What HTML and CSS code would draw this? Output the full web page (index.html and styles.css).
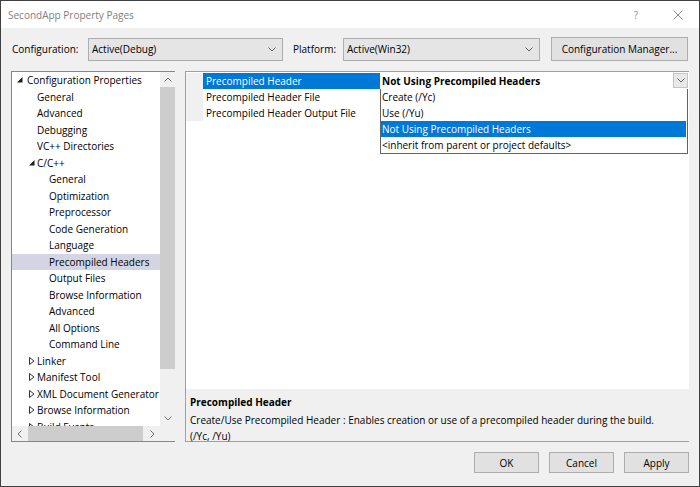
FILE: index.html
```html
<!DOCTYPE html>
<html>
<head>
<meta charset="utf-8">
<title>SecondApp Property Pages</title>
<link rel="stylesheet" href="styles.css">
</head>
<body>
<div class="window">
  <div class="titlebar">
    <span class="title">SecondApp Property Pages</span>
    <span class="tb-btn">?</span>
    <span class="tb-btn"><svg width="10" height="10" viewBox="0 0 10 10"><path d="M0.5 0.5 L9.5 9.5 M9.5 0.5 L0.5 9.5" stroke="#8c8c8c" stroke-width="1" fill="none"/></svg></span>
  </div>

  <div class="config-row">
    <span class="label-config">Configuration:</span>
    <div class="combo combo-config"><span>Active(Debug)</span><svg class="chev" width="8" height="5" viewBox="0 0 8 5"><polyline points="0.5,0.5 4,4 7.5,0.5" stroke="#606060" fill="none"/></svg></div>
    <span class="label-platform">Platform:</span>
    <div class="combo combo-platform"><span>Active(Win32)</span><svg class="chev" width="8" height="5" viewBox="0 0 8 5"><polyline points="0.5,0.5 4,4 7.5,0.5" stroke="#606060" fill="none"/></svg></div>
    <button class="btn btn-cfgmgr">Configuration Manager...</button>
  </div>

  <div class="main">
    <div class="tree">
      <div class="tree-body">
        <div class="tree-items">
          <div class="row l0"><span class="toggle"><svg width="6" height="6" viewBox="0 0 6 6"><polygon points="5.5,0 5.5,5.5 0,5.5" fill="#1e1e1e"/></svg></span>Configuration Properties</div>
          <div class="row l1"><span class="toggle"></span>General</div>
          <div class="row l1"><span class="toggle"></span>Advanced</div>
          <div class="row l1"><span class="toggle"></span>Debugging</div>
          <div class="row l1"><span class="toggle"></span>VC++ Directories</div>
          <div class="row l1"><span class="toggle tg1"><svg width="6" height="6" viewBox="0 0 6 6"><polygon points="5.5,0 5.5,5.5 0,5.5" fill="#1e1e1e"/></svg></span>C/C++</div>
          <div class="row l2"><span class="toggle"></span>General</div>
          <div class="row l2"><span class="toggle"></span>Optimization</div>
          <div class="row l2"><span class="toggle"></span>Preprocessor</div>
          <div class="row l2"><span class="toggle"></span>Code Generation</div>
          <div class="row l2"><span class="toggle"></span>Language</div>
          <div class="row l2 selected"><span class="toggle"></span>Precompiled Headers</div>
          <div class="row l2"><span class="toggle"></span>Output Files</div>
          <div class="row l2"><span class="toggle"></span>Browse Information</div>
          <div class="row l2"><span class="toggle"></span>Advanced</div>
          <div class="row l2"><span class="toggle"></span>All Options</div>
          <div class="row l2"><span class="toggle"></span>Command Line</div>
          <div class="row l1"><span class="toggle tg1"><svg width="6" height="8" viewBox="0 0 6 8"><polygon points="0.5,0.5 5,4 0.5,7.5" fill="none" stroke="#333"/></svg></span>Linker</div>
          <div class="row l1"><span class="toggle tg1"><svg width="6" height="8" viewBox="0 0 6 8"><polygon points="0.5,0.5 5,4 0.5,7.5" fill="none" stroke="#333"/></svg></span>Manifest Tool</div>
          <div class="row l1"><span class="toggle tg1"><svg width="6" height="8" viewBox="0 0 6 8"><polygon points="0.5,0.5 5,4 0.5,7.5" fill="none" stroke="#333"/></svg></span>XML Document Generator</div>
          <div class="row l1"><span class="toggle tg1"><svg width="6" height="8" viewBox="0 0 6 8"><polygon points="0.5,0.5 5,4 0.5,7.5" fill="none" stroke="#333"/></svg></span>Browse Information</div>
          <div class="row l1"><span class="toggle tg1"><svg width="6" height="8" viewBox="0 0 6 8"><polygon points="0.5,0.5 5,4 0.5,7.5" fill="none" stroke="#333"/></svg></span>Build Events</div>
        </div>
        <div class="vscroll">
          <div class="sb-arrow"><svg width="8" height="5" viewBox="0 0 8 5"><polyline points="0.5,4.5 4,1 7.5,4.5" stroke="#707070" fill="none"/></svg></div>
          <div class="vthumb"></div>
          <div class="vtrack"></div>
          <div class="sb-arrow"><svg width="8" height="5" viewBox="0 0 8 5"><polyline points="0.5,0.5 4,4 7.5,0.5" stroke="#707070" fill="none"/></svg></div>
        </div>
      </div>
      <div class="hscroll-row">
        <div class="hscroll">
          <div class="sb-arrow"><svg width="5" height="8" viewBox="0 0 5 8"><polyline points="4.5,0.5 1,4 4.5,7.5" stroke="#707070" fill="none"/></svg></div>
          <div class="hthumb"></div>
          <div class="htrack"></div>
          <div class="sb-arrow"><svg width="5" height="8" viewBox="0 0 5 8"><polyline points="0.5,0.5 4,4 0.5,7.5" stroke="#707070" fill="none"/></svg></div>
        </div>
        <div class="corner"></div>
      </div>
    </div>

    <div class="right">
      <div class="grid">
        <div class="prow">
          <div class="gutter"></div>
          <div class="pname sel">Precompiled Header</div>
          <div class="pval"><span class="pval-text bold">Not Using Precompiled Headers</span><span class="dd-btn"><svg width="8" height="5" viewBox="0 0 8 5"><polyline points="0.5,0.5 4,4 7.5,0.5" stroke="#606060" fill="none"/></svg></span></div>
        </div>
        <div class="prow">
          <div class="gutter"></div>
          <div class="pname">Precompiled Header File</div>
          <div class="pval"></div>
        </div>
        <div class="prow">
          <div class="gutter"></div>
          <div class="pname">Precompiled Header Output File</div>
          <div class="pval"></div>
        </div>
        <div class="dropdown">
          <div class="dd-item">Create (/Yc)</div>
          <div class="dd-item">Use (/Yu)</div>
          <div class="dd-item dd-sel">Not Using Precompiled Headers</div>
          <div class="dd-item">&lt;inherit from parent or project defaults&gt;</div>
        </div>
      </div>
      <div class="desc">
        <div class="desc-title">Precompiled Header</div>
        <div class="desc-text">Create/Use Precompiled Header : Enables creation or use of a precompiled header during the build.<br>(/Yc, /Yu)</div>
      </div>
    </div>
  </div>

  <div class="buttons">
    <button class="btn btn-dlg">OK</button>
    <button class="btn btn-dlg">Cancel</button>
    <button class="btn btn-dlg">Apply</button>
  </div>
</div>
</body>
</html>
```

FILE: styles.css
```css
* { box-sizing: border-box; }
html, body { margin: 0; padding: 0; }
body {
  width: 700px;
  height: 487px;
  overflow: hidden;
  font-family: "Open Sans", "Noto Sans", sans-serif;
  font-size: 10px;
  color: #000;
  background: #f0f0f0;
}
.window {
  width: 700px;
  height: 487px;
  border: 1px solid #404040;
  background: #f0f0f0;
  display: flex;
  flex-direction: column;
}
.titlebar {
  height: 27px;
  flex: none;
  background: #fff;
  display: flex;
  align-items: center;
}
.title {
  flex: 1;
  padding-left: 7px;
  color: #808080;
}
.tb-btn {
  width: 42px;
  height: 27px;
  display: flex;
  align-items: center;
  justify-content: center;
  color: #8c8c8c;
}

.config-row {
  flex: none;
  display: flex;
  align-items: center;
  height: 24px;
  margin-top: 9px;
  padding-left: 11px;
}
.label-config { width: 76px; }
.label-platform { margin-left: 10px; width: 50px; }
.combo {
  height: 23px;
  border: 1px solid #adadad;
  background: #e5e5e5;
  display: flex;
  align-items: center;
  justify-content: space-between;
  padding: 0 6px 0 3px;
}
.combo-config { width: 195px; }
.combo-platform { width: 197px; }
.btn {
  font-family: inherit;
  font-size: inherit;
  color: #000;
  background: #e1e1e1;
  border: 1px solid #adadad;
  padding: 0;
  margin: 0;
}
.btn-cfgmgr { margin-left: 11px; width: 137px; height: 24px; }

.main {
  flex: none;
  display: flex;
  margin-top: 10px;
  padding-left: 10px;
  height: 371px;
}
.tree {
  width: 164px;
  height: 371px;
  display: flex;
  flex-direction: column;
  border: 1px solid #828790;
  border-right: none;
}
.tree-body { display: flex; height: 354px; }
.tree-items {
  width: 148px;
  height: 354px;
  background: #fff;
  overflow: hidden;
}
.row {
  height: 16.5px;
  line-height: 16.5px;
  white-space: nowrap;
  display: flex;
  align-items: center;
}
.toggle {
  width: 10px;
  flex: none;
  display: flex;
  align-items: center;
}
.tg1 { padding-left: 2px; }
.l0 { padding-left: 5px; }
.l1 { padding-left: 15px; }
.l2 { padding-left: 27px; }
.selected { background: #d3d6e2; }

.vscroll {
  width: 15px;
  background: #f0f0f0;
  display: flex;
  flex-direction: column;
}
.sb-arrow {
  width: 15px;
  height: 15px;
  flex: none;
  display: flex;
  align-items: center;
  justify-content: center;
}
.vthumb { height: 282px; background: #cdcdcd; }
.vtrack { flex: 1; }
.hscroll-row { display: flex; height: 15px; }
.hscroll { width: 148px; display: flex; background: #f0f0f0; }
.hthumb { width: 115px; margin-left: 1px; background: #cdcdcd; }
.htrack { flex: 1; }
.corner { width: 15px; background: #f0f0f0; }

.right {
  margin-left: 10px;
  width: 504px;
  display: flex;
  flex-direction: column;
}
.grid {
  height: 318px;
  background: #fff;
  border-left: 1px solid #a0a0a0;
  border-top: 1px solid #a0a0a0;
  padding-top: 1px;
  position: relative;
}
.prow {
  display: flex;
  height: 16px;
  line-height: 16px;
  white-space: nowrap;
}
.gutter { width: 17px; flex: none; background: #f0f0f0; }
.pname { width: 177px; flex: none; padding-left: 3px; }
.pname.sel { background: #0078d7; color: #fff; }
.pval {
  flex: 1;
  display: flex;
  align-items: center;
  padding-left: 2px;
}
.pval-text { flex: 1; }
.bold { font-weight: 700; }
.dd-btn {
  width: 15px;
  height: 15px;
  margin-right: 1px;
  margin-top: -1px;
  background: #e8e8e8;
  border: 1px solid #c4c4c4;
  display: flex;
  align-items: center;
  justify-content: center;
}
.dropdown {
  position: absolute;
  left: 194px;
  top: 17px;
  width: 308px;
  background: #fff;
  border: 1px solid #646464;
  border-top: none;
}
.dd-item {
  height: 16px;
  line-height: 16px;
  padding-left: 1px;
  white-space: nowrap;
}
.dd-sel { background: #0078d7; color: #fff; margin-right: 1px; }

.desc {
  height: 53px;
  border-left: 1px solid #a0a0a0;
  border-bottom: 1px solid #a0a0a0;
  padding: 5px 0 0 4px;
}
.desc-title { font-weight: 700; line-height: 16px; }
.desc-text { margin-top: 2px; line-height: 16px; }

.buttons {
  flex: none;
  display: flex;
  justify-content: flex-end;
  gap: 10px;
  margin-top: 10px;
  padding-right: 10px;
}
.btn-dlg { width: 65px; height: 21px; }
```
